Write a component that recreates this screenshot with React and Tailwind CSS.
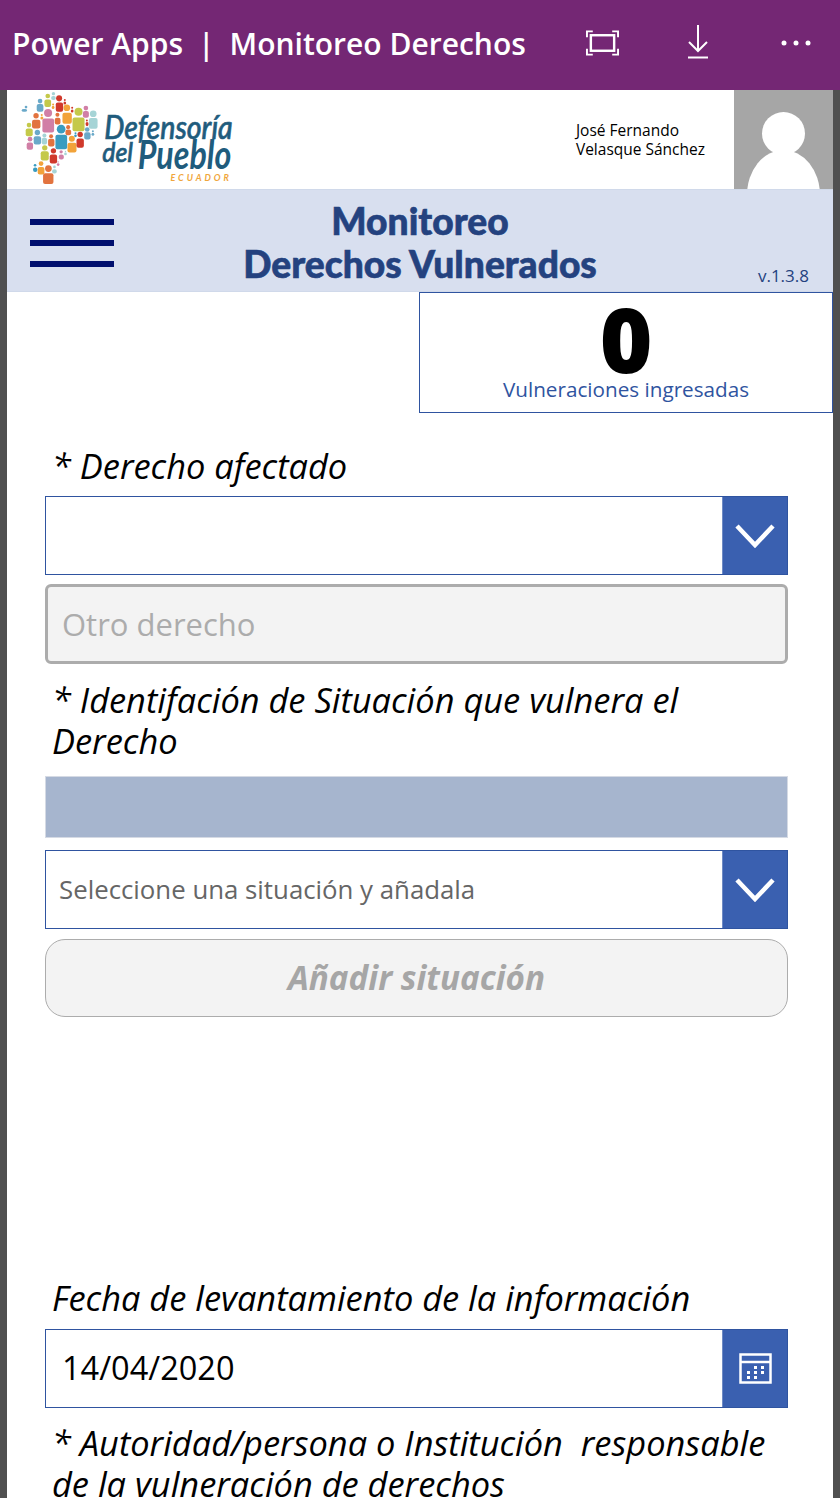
const OPEN = "font-['Open_Sans',sans-serif]";

// [head x, head y, head r, body x, body y, body w, body h, color] in 3x logo coordinates
const people = [
  [120, 300, 7, 110, 309, 20, 23, "#6aa9c9"],
  [143, 285, 7, 133, 295, 20, 23, "#c4c94a"],
  [160, 278, 5, 153, 285, 14, 12, "#a6d4d6"],
  [177, 292, 9, 167, 304, 22, 28, "#d0392b"],
  [194, 297, 3, 190, 301, 8, 9, "#d0392b"],
  [200, 320, 10, 187, 335, 28, 33, "#f2a33a"],
  [159, 310, 3, 155, 314, 8, 10, "#f2a33a"],
  [125, 342, 3, 121, 346, 9, 9, "#f2a33a"],
  [144, 336, 12, 127, 352, 35, 42, "#d17fa6"],
  [172, 341, 6, 164, 350, 17, 20, "#e2733f"],
  [235, 332, 12, 217, 349, 36, 41, "#c4c94a"],
  [257, 321, 7, 248, 330, 18, 20, "#d17fa6"],
  [216, 320, 3, 212, 325, 8, 9, "#d0392b"],
  [279, 338, 10, 266, 351, 26, 32, "#a6d4d6"],
  [260, 358, 3, 256, 363, 9, 12, "#d0392b"],
  [108, 344, 8, 96, 356, 25, 26, "#e2733f"],
  [87, 372, 7, 77, 382, 21, 23, "#c4c94a"],
  [112, 394, 8, 101, 405, 22, 25, "#6aa9c9"],
  [133, 403, 6, 125, 410, 16, 20, "#a6d4d6"],
  [183, 384, 13, 166, 401, 35, 43, "#3a9cc0"],
  [204, 378, 6, 196, 385, 17, 17, "#e2733f"],
  [153, 405, 6, 144, 413, 19, 23, "#e2733f"],
  [90, 414, 7, 80, 424, 19, 22, "#d17fa6"],
  [215, 413, 9, 202, 425, 27, 29, "#f2a33a"],
  [240, 400, 8, 229, 412, 22, 28, "#d0392b"],
  [261, 385, 7, 252, 393, 19, 22, "#6aa9c9"],
  [278, 390, 3, 274, 395, 8, 9, "#6aa9c9"],
  [226, 396, 3, 222, 400, 8, 8, "#3a9cc0"],
  [134, 440, 8, 122, 450, 24, 28, "#c4c94a"],
  [160, 449, 8, 149, 460, 22, 27, "#d0392b"],
  [183, 452, 5, 176, 460, 15, 15, "#d17fa6"],
  [123, 487, 7, 113, 497, 20, 23, "#f2a33a"],
  [105, 492, 4, 99, 499, 13, 13, "#3a9cc0"],
  [145, 502, 10, 129, 516, 31, 32, "#e2733f"],
  [163, 497, 4, 156, 504, 14, 13, "#a6d4d6"],
  [174, 482, 2, 170, 486, 8, 8, "#d17fa6"],
  [196, 451, 2, 192, 454, 8, 8, "#a6d4d6"],
  [78, 318, 4, 65, 324, 16, 8, "#6aa9c9"],
];

function Logo() {
  return (
    <svg width="214" height="97" viewBox="60 270 640 290" className="block">
      {people.map(([hx, hy, hr, bx, by, bw, bh, color], i) => (
        <g key={i} fill={color}>
          <circle cx={hx} cy={hy} r={hr} />
          <rect x={bx} y={by} width={bw} height={bh} rx="6" />
        </g>
      ))}
      <g fill="#1f5c7d" fontFamily="Lato, sans-serif" fontStyle="italic">
        <text x="312" y="413" fontSize="96" fontWeight="500" stroke="#1f5c7d" strokeWidth="2" textLength="384" lengthAdjust="spacingAndGlyphs">
          Defensoría
        </text>
        <text x="306" y="482" fontSize="82" fontWeight="500" stroke="#1f5c7d" strokeWidth="2" textLength="92" lengthAdjust="spacingAndGlyphs">
          del
        </text>
        <text x="412" y="502" fontSize="118" fontWeight="700" textLength="280" lengthAdjust="spacingAndGlyphs">
          Pueblo
        </text>
      </g>
      <text
        x="510"
        y="539"
        fill="#f0a63c"
        fontFamily="Lato, sans-serif"
        fontStyle="italic"
        fontWeight="700"
        fontSize="27"
        textLength="175"
      >
        ECUADOR
      </text>
    </svg>
  );
}

function FitScreenIcon() {
  return (
    <svg width="33" height="26" viewBox="0 0 34 26" fill="none" stroke="white">
      <rect x="5" y="5" width="24" height="16" strokeWidth="2.500" />
      <path d="M1 7V1h6M27 1h6v6M1 19v6h6M27 25h6v-6" strokeWidth="2" />
    </svg>
  );
}

function DownloadIcon() {
  return (
    <svg width="22" height="34" viewBox="0 0 22 34" fill="none" stroke="white" strokeWidth="2">
      <path d="M11 0v26M2 17l9 9 9-9" />
      <path d="M1 32.500h20" />
    </svg>
  );
}

function MoreIcon() {
  return (
    <svg width="30" height="6" viewBox="0 0 30 6" fill="white">
      <circle cx="3" cy="3" r="2.500" />
      <circle cx="15" cy="3" r="2.500" />
      <circle cx="27" cy="3" r="2.500" />
    </svg>
  );
}

function ChevronIcon() {
  return (
    <svg width="40" height="24" viewBox="0 0 40 24" fill="none">
      <path d="M2 2l18 19L38 2" stroke="white" strokeWidth="4.500" />
    </svg>
  );
}

function CalendarIcon() {
  const dots = [
    [15, 13], [22, 13],
    [8, 18], [15, 18], [22, 18],
    [8, 23], [15, 23],
  ];
  return (
    <svg width="33" height="31" viewBox="0 0 33 31" fill="none">
      <rect x="1.500" y="1.500" width="30" height="28" stroke="white" strokeWidth="2.500" />
      <path d="M2 9h29" stroke="white" strokeWidth="2.500" />
      {dots.map(([x, y]) => (
        <rect key={`${x}-${y}`} x={x} y={y} width="3" height="3" fill="white" />
      ))}
    </svg>
  );
}

function Label({ children, className = "" }) {
  return (
    <p className={`${OPEN} px-[7px] text-[34.400px] leading-[41px] whitespace-pre-wrap italic text-black ${className}`}>
      {children}
    </p>
  );
}

function FieldButton({ children }) {
  return (
    <div className="flex h-full w-[65px] shrink-0 items-center justify-center border-l border-[#6f8bc4] bg-[#3a60b0]">
      {children}
    </div>
  );
}

function Dropdown({ children, className = "" }) {
  return (
    <div className={`flex h-[79px] items-stretch border border-[#2f54a0] bg-white ${className}`}>
      <div className={`${OPEN} flex min-w-0 flex-1 items-center px-[13px] text-[25.800px] text-[#666666]`}>
        {children}
      </div>
      <FieldButton>
        <ChevronIcon />
      </FieldButton>
    </div>
  );
}

export default function App() {
  return (
    <div className="flex h-[1498px] w-[840px] flex-col overflow-hidden bg-[#505050]">
      {/* POWER APPS BAR */}
      <header className="flex h-[90px] shrink-0 items-center justify-between bg-[#742774] pb-[4px] pl-[12px] pr-[29px] text-white">
        <div className="flex items-center font-['Open_Sans',sans-serif] text-[30px] font-semibold">
          <span>Power Apps</span>
          <span className="mx-[15px]">|</span>
          <span>Monitoreo Derechos</span>
        </div>
        <div className="flex items-center">
          <FitScreenIcon />
          <div className="ml-[68px] mb-[2px]">
            <DownloadIcon />
          </div>
          <div className="ml-[72px]">
            <MoreIcon />
          </div>
        </div>
      </header>

      <main className="mx-[7px] flex min-h-0 flex-1 flex-col overflow-hidden bg-white">
        {/* USER ROW */}
        <div className="flex h-[99px] shrink-0 items-center">
          <div className="ml-[13px]">
            <Logo />
          </div>
          <div className={`${OPEN} ml-auto mr-[29px] text-[15.500px] leading-[19px] text-black`}>
            <p>José Fernando</p>
            <p>Velasque Sánchez</p>
          </div>
          <div className="relative h-full w-[99px] shrink-0 overflow-hidden bg-[#a6a6a6]">
            <div className="absolute left-[28px] top-[22px] h-[43px] w-[43px] rounded-full bg-white" />
            <div className="absolute left-[13px] top-[60px] h-[90px] w-[73px] rounded-[50%] bg-white" />
          </div>
        </div>

        {/* TITLE BAND */}
        <div className="grid h-[103px] shrink-0 grid-cols-[1fr_auto_1fr] border-y border-[#d0d9ea] bg-[#d8dfef]">
          <div className="flex flex-col gap-[15px] pl-[23px] pt-[29px]">
            <div className="h-[6px] w-[84px] bg-[#000f6e]" />
            <div className="h-[6px] w-[84px] bg-[#000f6e]" />
            <div className="h-[6px] w-[84px] bg-[#000f6e]" />
          </div>
          <h1 className="pt-[9px] text-center font-['Lato',sans-serif] text-[37.200px] leading-[43px] font-black text-[#24427f] [-webkit-text-stroke:0.6px_#24427f]">
            Monitoreo
            <br />
            Derechos Vulnerados
          </h1>
          <div className="flex items-end justify-end pb-[3px] pr-[24px]">
            <span className={`${OPEN} text-[17px] text-[#24427f]`}>v.1.3.8</span>
          </div>
        </div>

        {/* COUNTER */}
        <div className="ml-auto flex h-[121px] w-[414px] shrink-0 flex-col items-center border-[1.500px] border-[#2f54a0]">
          <div className={`${OPEN} h-[83px] text-[90px] leading-[90px] font-extrabold text-black`}>0</div>
          <div className={`${OPEN} text-[20.700px] leading-[26px] text-[#2f54a0]`}>Vulneraciones ingresadas</div>
        </div>

        {/* FORM */}
        <div className="flex flex-col pl-[38px] pr-[45px] pt-[32px]">
          <Label>* Derecho afectado</Label>
          <Dropdown className="mt-[10px]" />

          <div className={`${OPEN} mt-[9px] flex h-[80px] items-center rounded-md border-[3px] border-[#acacac] bg-[#f3f3f3] px-[14px] text-[31px] text-[#acacac]`}>
            Otro derecho
          </div>

          <Label className="mt-[15px]">* Identifación de Situación que vulnera el Derecho</Label>
          <div className="mt-[15px] h-[62px] border border-[#d5dae4] bg-[#a6b5ce]" />
          <Dropdown className="mt-[12px]">Seleccione una situación y añadala</Dropdown>

          <div className={`${OPEN} mt-[10px] flex h-[78px] items-center justify-center rounded-[20px] border border-[#acacac] bg-[#f3f3f3] text-[33.200px] font-bold text-[#a6a6a6] italic`}>
            Añadir situación
          </div>

          <Label className="mt-[260px]">Fecha de levantamiento de la información</Label>

          <div className="mt-[11px] flex h-[79px] items-stretch border border-[#2f54a0] bg-white">
            <div className={`${OPEN} flex flex-1 items-center px-[16px] text-[32.500px] text-black`}>14/04/2020</div>
            <FieldButton>
              <CalendarIcon />
            </FieldButton>
          </div>

          <Label className="mt-[14px]">* Autoridad/persona o Institución  responsable de la vulneración de derechos</Label>
        </div>
      </main>
    </div>
  );
}
